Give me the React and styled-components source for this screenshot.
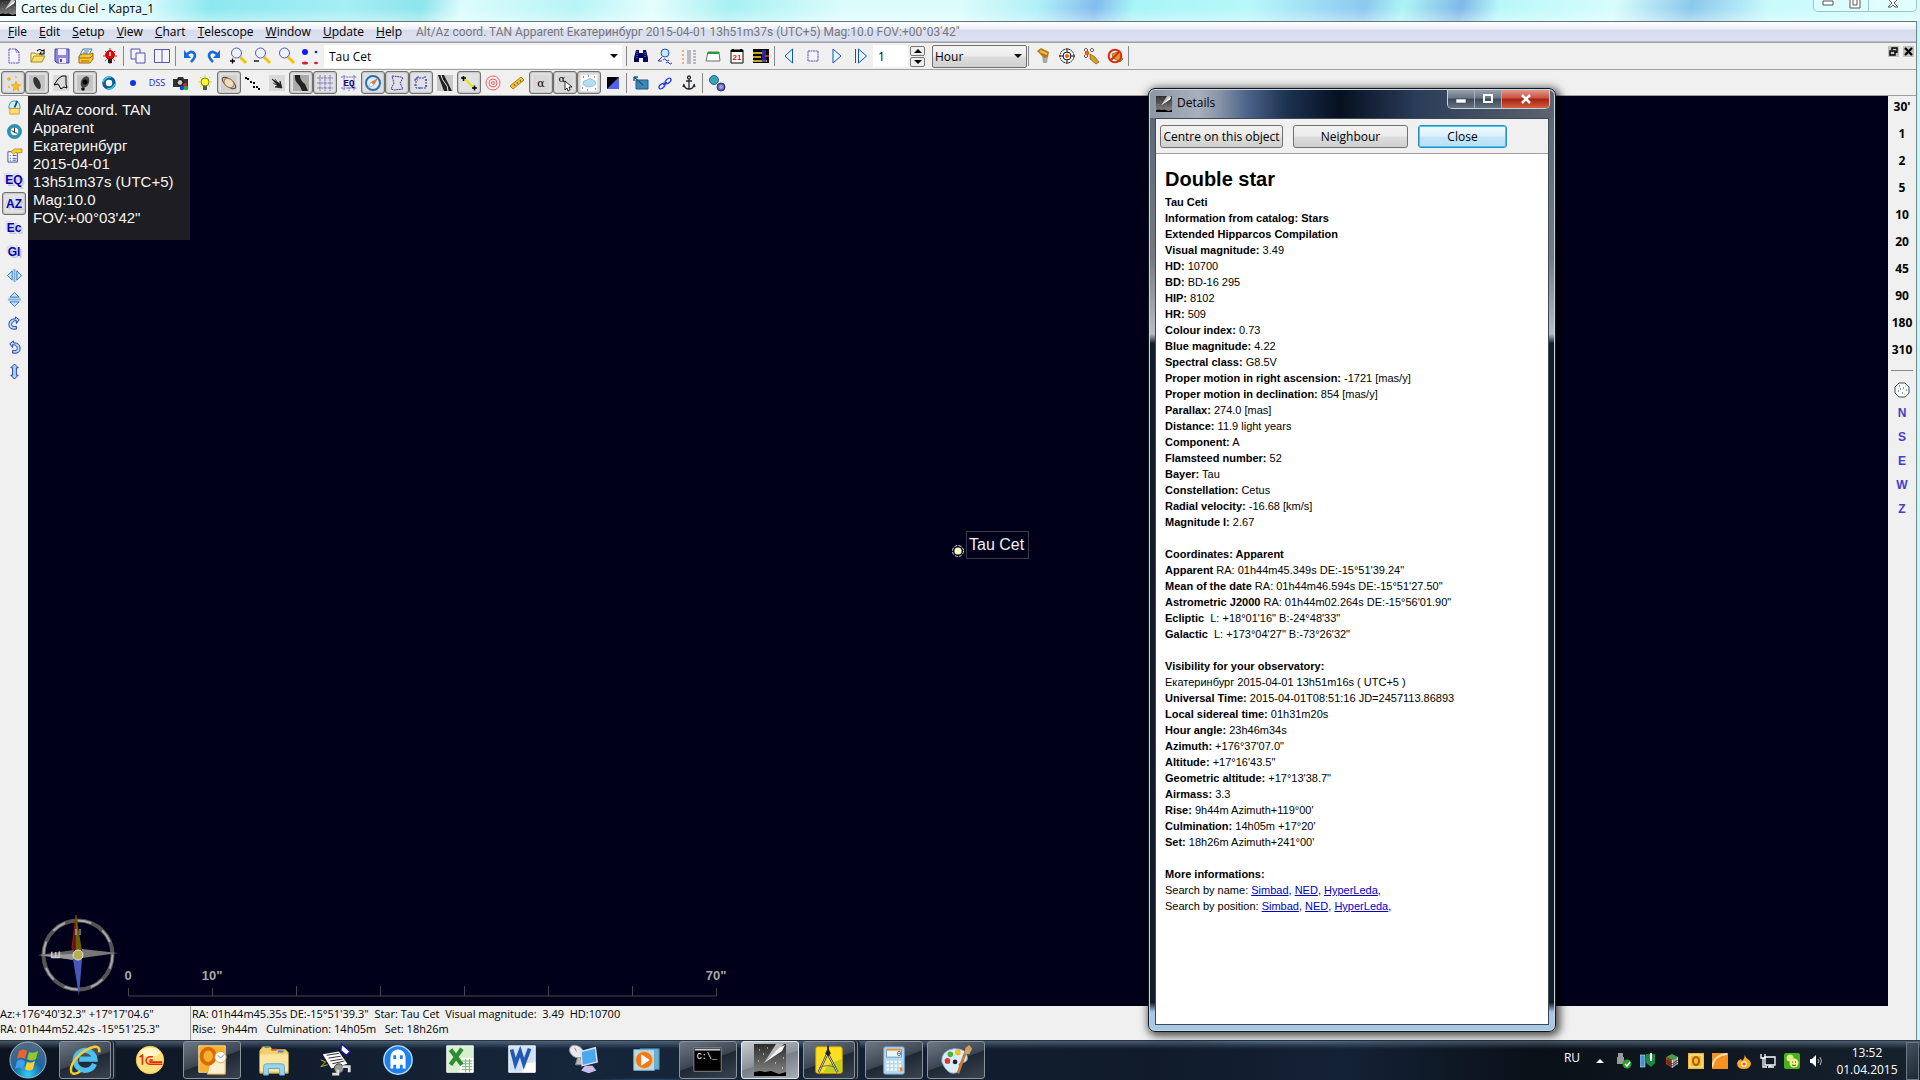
import React, { useState } from "react";
import styled, { createGlobalStyle, css } from "styled-components";

const GlobalStyle = createGlobalStyle`
  * {
    box-sizing: border-box;
  }
  body {
    margin: 0;
    background: #f0f0f0;
    color: #000;
    font-family: "Open Sans", "Noto Sans", sans-serif;
    font-size: 12px;
  }
  button, input, select {
    font: inherit;
    color: inherit;
    margin: 0;
  }
`;

// 16x16 drawings for the tool bars
const icons = {
  newChart: (
    <path d="M3 1h7l3 3v11H3zM10 1v3h3" fill="#f6f4ff" stroke="#5a50b0" strokeDasharray="2 .6" />
  ),
  open: (
    <>
      <path d="M1 14V5h4l1 1h6v3" fill="#fff3a0" stroke="#a88a20" />
      <path d="M1 14l3-6h11l-3 6z" fill="#ffe06a" stroke="#a88a20" />
      <path d="M7 3q3-3 5 0l2-1v4h-4l1-2" fill="none" stroke="#111" strokeWidth="1.2" />
    </>
  ),
  save: (
    <>
      <path d="M1 1h14v14H3l-2-2z" fill="#8e86d8" stroke="#4a40a8" />
      <path d="M4 1h8v6H4z" fill="#f0eeff" />
      <path d="M5 10h7v5H5z" fill="#eee" />
      <path d="M6 11h2v3H6z" fill="#4a40a8" />
    </>
  ),
  print: (
    <>
      <path d="M5 1h9l-3 6H2z" fill="#fff" stroke="#3a70b0" />
      <path d="M6 3h5M5 5h5" stroke="#3a70b0" />
      <path d="M1 8l3-2h9l2-1v6l-3 4H1z" fill="#ffc935" stroke="#9a6a10" />
      <path d="M1 10h11l3-3M3 13h8" stroke="#9a6a10" fill="none" />
    </>
  ),
  redLamp: (
    <>
      <path d="M8 0v16M1 8h14M3 3l10 10M13 3L3 13" stroke="#e01010" strokeDasharray="2 1" />
      <circle cx="8" cy="7" r="4.4" fill="#f00000" stroke="#900" />
      <path d="M6 11h4v4H6z" fill="#222" />
      <path d="M8 4v4" stroke="#fff" strokeWidth="1.5" />
    </>
  ),
  cascade: (
    <>
      <path d="M1 1h9v10H1z" fill="#f4f4fa" stroke="#5a50b0" />
      <path d="M6 5h9v10H6z" fill="#f4f4fa" stroke="#5a50b0" />
    </>
  ),
  tile: <path d="M.5 1.5h15v13H.5zM8 1.5v13" fill="#f4f4fa" stroke="#5a50b0" />,
  undo: (
    <>
      <path d="M4 7q5-5 8-2t-3 9" fill="none" stroke="#1a6cd0" strokeWidth="2.6" />
      <path d="M2 2v8h7z" fill="#1a6cd0" />
    </>
  ),
  redo: (
    <>
      <path d="M12 7q-5-5-8-2t3 9" fill="none" stroke="#1a6cd0" strokeWidth="2.6" />
      <path d="M14 2v8H7z" fill="#1a6cd0" />
    </>
  ),
  zoomIn: (
    <>
      <path d="M10 9l6 6" stroke="#f5c400" strokeWidth="3" />
      <circle cx="6.5" cy="5" r="5" fill="#eef4ff" stroke="#5550c0" />
      <path d="M0 13h5M2.5 10.5v5" stroke="#000" strokeWidth="1.3" />
    </>
  ),
  zoomOut: (
    <>
      <path d="M10 9l6 6" stroke="#f5c400" strokeWidth="3" />
      <circle cx="6.5" cy="5" r="5" fill="#eef4ff" stroke="#5550c0" />
      <path d="M0 13h5" stroke="#000" strokeWidth="1.3" />
    </>
  ),
  zoom: (
    <>
      <path d="M10 9l6 6" stroke="#f5c400" strokeWidth="3" />
      <circle cx="6.5" cy="5" r="5" fill="#eef4ff" stroke="#5550c0" />
    </>
  ),
  starSize: (
    <>
      <circle cx="3" cy="4" r="3" fill="#1818f0" />
      <circle cx="14" cy="4" r="1.3" fill="#1818f0" />
      <ellipse cx="3" cy="15" rx="3" ry="1.5" fill="#e01840" />
      <ellipse cx="14" cy="15" rx="2" ry="1.2" fill="#e01840" />
    </>
  ),
  binoculars: (
    <>
      <path d="M3 2h3v3h4V2h3l2 8v4h-5v-4H6v4H1v-4z" fill="#000060" />
      <path d="M4 3v7M12 4v6" stroke="#8090e0" strokeDasharray="1 1" />
    </>
  ),
  searchList: (
    <>
      <circle cx="8" cy="5" r="4" fill="#bfeaff" stroke="#2050d0" />
      <path d="M5 9l-4 4h4M6 12q2-2 3 0t3 0M9 15q2-2 3 0t3 0" fill="none" stroke="#2030d0" />
    </>
  ),
  list: (
    <>
      <path d="M1 3h3M1 7h3M1 11h3M1 15h3" stroke="#e07010" strokeDasharray="2 1" />
      <path d="M6 3h4M6 5h4M6 7h4M6 9h4M6 11h4M6 13h4M6 15h4M12 3h3M12 6h3M12 9h3M12 12h3M12 15h3" stroke="#667" strokeWidth=".8" />
    </>
  ),
  calendar: (
    <>
      <path d="M3 4h11l1 9H1z" fill="#fff" stroke="#707070" />
      <path d="M3 4h11v2H2z" fill="#20a030" />
    </>
  ),
  date: (
    <>
      <path d="M2 2h12v13H2z" fill="#fff" stroke="#000" />
      <path d="M2 3h12M4 1v3M12 1v3" stroke="#000" strokeWidth="2" />
      <text x="8" y="12" textAnchor="middle" fontSize="8" fontWeight="700" fill="#e01010" fontFamily="Liberation Sans">21</text>
    </>
  ),
  ephemeris: (
    <>
      <path d="M0 1h16v14H0z" fill="#000" />
      <path d="M0 5h10M0 9h8M0 13h14" stroke="#ffe020" strokeWidth="1.6" />
      <path d="M9 2h4v12H9z" fill="#3030c0" opacity=".8" />
      <path d="M12 8h4" stroke="#e02020" strokeWidth="2" />
    </>
  ),
  back: <path d="M11.5 1v14L4 8z" fill="#e4f6ff" stroke="#1050c0" />,
  stop: <path d="M3 3h10v10H3z" fill="#f4f2ff" stroke="#5a50b0" strokeDasharray="2 .5" />,
  play: <path d="M4 1v14l8-7z" fill="#e4f6ff" stroke="#1050c0" />,
  forward: <path d="M2.5 1v14M5.5 1v14l8-7z" fill="#e4f6ff" stroke="#1050c0" />,
  telescope: (
    <>
      <path d="M7 7l1 8h4l1-7z" fill="#a8a8a8" />
      <path d="M2 3l4-3 8 4-1 5-4 1z" fill="#b87818" />
      <path d="M5 3l7 3" stroke="#f0c040" strokeWidth="2" />
    </>
  ),
  target: (
    <>
      <circle cx="8" cy="8" r="7" fill="none" stroke="#222" strokeDasharray="2 .6" />
      <circle cx="8" cy="8" r="4" fill="none" stroke="#222" />
      <path d="M8 0v5M8 11v5M0 8h5M11 8h5" stroke="#222" />
      <circle cx="8" cy="8" r="2" fill="#f06010" />
    </>
  ),
  slew: (
    <>
      <path d="M1 2h12M1 8h6M3 0v12M9 0v5" stroke="#222" strokeDasharray="1 2" strokeWidth="1.4" />
      <circle cx="4" cy="5" r="2.3" fill="#f06010" />
      <path d="M7 6l5 3 4 5-3 2-6-5z" fill="#d8a020" stroke="#704800" strokeWidth=".6" />
    </>
  ),
  noScope: (
    <>
      <path d="M5 6l5-2 6 7-3 3-7-4z" fill="#d8a020" stroke="#704800" strokeWidth=".6" />
      <circle cx="8" cy="8" r="6.3" fill="none" stroke="#e02810" strokeWidth="2" />
      <path d="M4 12l8-8" stroke="#e02810" strokeWidth="2" />
    </>
  ),
  stars: (
    <>
      <path d="M11 6l1 3 4 1-3 2 1 4-3-2-3 2 1-4-3-2 4-1z" fill="#f8c020" stroke="#e09000" strokeWidth=".5" />
      <path d="M4 2v4M2 4h4M3 12h2M11 1v2" stroke="#f0b010" strokeWidth="1.3" />
    </>
  ),
  nebula: (
    <>
      <path d="M0 0h16v16H0z" fill="#c4c4c4" />
      <ellipse cx="8" cy="8" rx="3" ry="6.5" transform="rotate(-24 8 8)" fill="#333" />
    </>
  ),
  outline: (
    <>
      <path d="M0 0h16v16H0z" fill="#dadada" />
      <path d="M9 1h4v8l1 4-3-1-3 2-3-5-4 1 4-6z" fill="none" stroke="#000" />
    </>
  ),
  galaxy: (
    <>
      <path d="M0 0h16v16H0z" fill="#c4c4c4" />
      <ellipse cx="8" cy="7" rx="4" ry="6" transform="rotate(24 8 7)" fill="#444" />
      <circle cx="8" cy="7" r="2.5" fill="#000" />
      <circle cx="6" cy="14" r="1.8" fill="#111" />
    </>
  ),
  swirl: (
    <>
      <circle cx="8" cy="8" r="5" fill="#fff" stroke="#0c5a9c" strokeWidth="3.5" />
      <path d="M2 7q2-5 8-5M14 9q-2 5-8 5" fill="none" stroke="#40c8e0" strokeWidth="1.6" />
    </>
  ),
  blueDot: <circle cx="8" cy="8" r="3" fill="#1030f0" />,
  camera: (
    <>
      <path d="M0 4h4l1-2h5l1 2h4v8H0z" fill="#333" />
      <circle cx="7" cy="7.5" r="3" fill="#ccc" stroke="#000" />
      <circle cx="12" cy="10" r="2" fill="#e02020" />
      <circle cx="9" cy="13" r="2.3" fill="#2040e0" />
      <circle cx="13" cy="13" r="2.3" fill="#20b040" />
    </>
  ),
  lamp: (
    <>
      <path d="M8 0v16M1 7h14M3 2l10 10M13 2L3 12" stroke="#d8d800" strokeDasharray="2 1" />
      <circle cx="8" cy="7" r="4" fill="#ffff30" stroke="#808000" />
      <path d="M6 11h4v4H6z" fill="#555" />
    </>
  ),
  saturn: (
    <>
      <path d="M0 0h16v16H0z" fill="#d0d0d0" />
      <ellipse cx="8" cy="8" rx="8" ry="3.5" transform="rotate(38 8 8)" fill="none" stroke="#604020" />
      <ellipse cx="8" cy="8" rx="5.5" ry="4" transform="rotate(38 8 8)" fill="#f0dcc0" stroke="#a07850" />
    </>
  ),
  asteroids: (
    <g fill="#000">
      <path d="M0 2h2v2H0zM2 3h2v2H2zM5 6h2v2H5zM8 7h2v2H8zM8 11h2v2H8zM11 11h2v2h-2zM13 13h2v2h-2z" />
    </g>
  ),
  comet: (
    <>
      <path d="M0 0h16v16H0z" fill="#d8d8d8" />
      <path d="M3 4l8 5V6l2 7-7-1 3-1zM6 4l4 5M4 8l5 3" fill="#222" stroke="#000" strokeWidth=".6" />
    </>
  ),
  milkyWay: (
    <>
      <path d="M0 0h16v16H0z" fill="#aaa" />
      <path d="M2 0h5q0 6 5 9l3 7H9Q8 12 5 9 1 5 2 0z" fill="#222" />
    </>
  ),
  grid: (
    <path d="M3 0v16M8 0v16M13 0v16M0 3h16M0 8h16M0 13h16" stroke="#6464b8" strokeWidth=".8" strokeDasharray="3 .6" />
  ),
  eqGrid: (
    <>
      <path d="M3 0v16M13 0v16M0 2h16M0 13h16M8 12v4" stroke="#5050c0" strokeWidth=".8" strokeDasharray="2 .6" />
      <text x="8" y="11" textAnchor="middle" fontSize="9" fontWeight="700" fill="#000080" fontFamily="Liberation Mono">EQ</text>
    </>
  ),
  compass: (
    <>
      <circle cx="8" cy="8" r="7" fill="#d8efff" stroke="#2a70b8" strokeWidth="2" />
      <path d="M13 3L9 10 6 7z" fill="#f07020" />
      <path d="M3 13l3-6 3 3z" fill="#fff" stroke="#777" strokeWidth=".5" />
    </>
  ),
  constLine: (
    <path d="M3 1l9 1 2 1-3 5 3 6-9 1-3-1 3-6z" fill="none" stroke="#3838c8" strokeDasharray="2 .6" />
  ),
  constBorder: (
    <path d="M3 3h9V1M3 3v10h10V3M1 5h4M1 10h3M5 1v3M12 5h3M12 11h3M7 12v3" fill="none" stroke="#3030d8" strokeDasharray="2 1" />
  ),
  photo: (
    <>
      <path d="M0 0h16v16H0z" fill="#c8c8c8" />
      <path d="M1 0h6l8 16H7z" fill="#222" />
      <path d="M4 0q1 5 4 8t3 8" fill="none" stroke="#eee" />
    </>
  ),
  measure: (
    <>
      <path d="M3 3l10 10" stroke="#e8e010" strokeWidth="2" />
      <path d="M0 3h5M2.5 1v5M11 13h5M13.5 10.5v5" stroke="#000" strokeWidth="1.5" />
    </>
  ),
  rings: (
    <g fill="none" stroke="#f06060">
      <circle cx="8" cy="8" r="7" />
      <circle cx="8" cy="8" r="4" />
      <circle cx="8" cy="8" r="1.5" />
    </g>
  ),
  ruler: (
    <>
      <path d="M1 11L12 2l3 3L4 14z" fill="#f0c040" stroke="#b08010" />
      <path d="M5 9l1 2M8 7l1 2M11 5l1 2" stroke="#806000" />
    </>
  ),
  alpha: (
    <>
      <path d="M0 0h16v16H0z" fill="#d8d8d8" />
      <text x="8" y="12" textAnchor="middle" fontSize="11" fontFamily="DejaVu Serif">α</text>
    </>
  ),
  alphaCursor: (
    <>
      <path d="M0 0h16v16H0z" fill="#d8d8d8" />
      <text x="5" y="7" textAnchor="middle" fontSize="10" fontFamily="DejaVu Serif">α</text>
      <path d="M8 6v9l2-2 1 3 2-1-1-3h3z" fill="#fff" stroke="#000" strokeWidth=".8" />
    </>
  ),
  cloud: (
    <>
      <path d="M0 0h16v16H0z" fill="#fff" />
      <path d="M2 9q0-4 4-4 3-3 6 0 3 1 3 4-3 3-7 3T2 9z" fill="#b8dcf0" stroke="#78b4dc" strokeWidth=".7" />
      <path d="M2 2h1M7 1h1M13 2h1M1 13h1M6 15h1M14 14h1" stroke="#0020d0" />
    </>
  ),
  contrast: (
    <>
      <path d="M2 2h12v12H2z" fill="#000" />
      <path d="M14 2v12H2z" fill="#5060f0" />
    </>
  ),
  syncChart: (
    <>
      <path d="M3 5h12v9H3z" fill="#3a88b8" stroke="#205880" />
      <path d="M1 2l9 8M1 2v4M1 2h4" stroke="#205880" strokeWidth="1.4" />
    </>
  ),
  link: (
    <g fill="none" stroke="#2038d8" strokeWidth="1.2">
      <ellipse cx="5" cy="11" rx="3.6" ry="2" transform="rotate(-42 5 11)" />
      <ellipse cx="11" cy="6" rx="3.6" ry="2" transform="rotate(-42 11 6)" />
      <path d="M6 10l4-3" />
    </g>
  ),
  anchor: (
    <path d="M8 4v10M5 6h6M3 10q1 4 5 4t5-4M3 9l-1 3M13 9l1 3M8 1a1.5 1.5 0 100 3 1.5 1.5 0 000-3" fill="none" stroke="#202830" strokeWidth="1.3" />
  ),
  track: (
    <>
      <circle cx="5" cy="5" r="4.5" fill="#40a0b8" stroke="#206880" />
      <circle cx="12" cy="12" r="4" fill="#6060b0" stroke="#303080" />
      <circle cx="12" cy="12" r="2" fill="#a0a0e8" />
    </>
  ),
  observatory: (
    <>
      <path d="M2 9q0-8 6-8t6 8z" fill="#d0f0f8" stroke="#3090b0" />
      <path d="M8 8l3-7" stroke="#205080" strokeWidth="2" />
      <path d="M3 9h10v6H3z" fill="#ffdf80" stroke="#e09820" />
    </>
  ),
  clock: (
    <>
      <circle cx="8" cy="8" r="6" fill="#fff" stroke="#3090b8" strokeWidth="4" />
      <path d="M8 4v5l3 1M5 7l3 2" stroke="#222" fill="none" />
    </>
  ),
  config: (
    <>
      <path d="M1 4h10v11H1z" fill="#fff" stroke="#4048a0" />
      <path d="M3 8h1M6 8h4M3 11h1M6 11h4M3 13h1M6 13h4" stroke="#4048a0" />
      <path d="M4 4l4-3h8v4H9L7 7z" fill="#f8d030" stroke="#a88010" strokeWidth=".8" />
    </>
  ),
  flipH: (
    <>
      <path d="M5.5 3v10L.5 8zM10.5 3v10l5-5z" fill="#b8e8fa" stroke="#2060c0" strokeWidth=".9" />
      <path d="M7.5 1v14M8.5 1v14" stroke="#3088d0" strokeWidth=".7" />
    </>
  ),
  flipV: (
    <>
      <path d="M3 5.5h10L8 .5zM3 10.5h10l-5 5z" fill="#b8e8fa" stroke="#2060c0" strokeWidth=".9" />
      <path d="M1 7.5h14M1 8.5h14" stroke="#3088d0" strokeWidth=".7" />
    </>
  ),
  rotateR: (
    <path d="M9 1l4 3-3 4V5q-5 0-5 4 0 3 5 2v3q-8 1-8-5 0-6 7-6z" fill="#b8e0ff" stroke="#2030b0" />
  ),
  rotateL: (
    <path d="M7 1L3 4l3 4V5q5 0 5 4 0 3-5 2v3q8 1 8-5 0-6-7-6z" fill="#b8e0ff" stroke="#2030b0" />
  ),
  flipBoth: (
    <path d="M8 0l4 4h-2v8h2l-4 4-4-4h2V4H4z" fill="#a8d8f8" stroke="#2038a8" />
  ),
  horizon: (
    <>
      <path d="M5 1h6l4 4v6l-4 4H5l-4-4V5z" fill="#fff" stroke="#305060" />
      <path d="M5 4h1M9 6h1M4 9h1M8 11h1M12 8h1M6 7h1" stroke="#103080" />
      <path d="M11 4h1M10 12h1" stroke="#e0a000" />
    </>
  ),
};

const Icon = ({ name, size = 16 }) => (
  <svg width={size} height={size} viewBox="0 0 16 16" overflow="visible" aria-hidden="true">
    {icons[name]}
  </svg>
);

const CometIcon = ({ size = 16 }) => (
  <svg width={size} height={size} viewBox="0 0 32 32" aria-hidden="true">
    <defs>
      <linearGradient id="cometSky" x1="0" y1="0" x2="0" y2="1">
        <stop offset="0" stopColor="#2c2c2c" />
        <stop offset="1" stopColor="#8a8a8a" />
      </linearGradient>
    </defs>
    <path d="M0 0h32v32H0z" fill="url(#cometSky)" />
    <path d="M10 19L22 0h8z" fill="#bbb" />
    <path d="M10 19L26 3l5-2-3 6z" fill="#f4f4f4" />
    <path d="M5 6h1M9 10h1M4 17h1M21 19h1M29 14h1M28 24h1M13 4h1" stroke="#ffd" />
    <path d="M0 28l6-1 5 1 6-1 8 3 7-2v4H0z" fill="#000" />
  </svg>
);

const mainTools = [
  [["newChart", "New chart"], ["open", "Open"], ["save", "Save"], ["print", "Print"], ["redLamp", "Night vision"]],
  [["cascade", "Cascade"], ["tile", "Tile"]],
  [["undo", "Undo"], ["redo", "Redo"], ["zoomIn", "Zoom in"], ["zoomOut", "Zoom out"], ["zoom", "Set field of view"], ["starSize", "Star size"]],
];

const searchTools = [["binoculars", "Search"], ["searchList", "Advanced search"], ["list", "Object list"], ["calendar", "Calendar"], ["date", "Date"], ["ephemeris", "Ephemeris"]];
const timeTools = [["back", "Step back"], ["stop", "Now"], ["play", "Step forward"], ["forward", "Animate"]];
const scopeTools = [["telescope", "Connect telescope"], ["target", "Slew"], ["slew", "Sync"], ["noScope", "Abort slew"]];

const displayTools = [
  ["stars", "Show stars", true],
  ["nebula", "Show nebulae", true],
  ["outline", "Show outlines"],
  ["galaxy", "Show pictures", true],
  ["swirl", "Refresh"],
  ["blueDot", "Blink"],
  ["dss", "DSS image"],
  ["camera", "Image list"],
  ["lamp", "Sky brightness"],
  ["saturn", "Show planets", true],
  ["asteroids", "Show asteroids"],
  ["comet", "Show comets"],
  ["milkyWay", "Show Milky Way", true],
  ["grid", "Show grid", true],
  ["eqGrid", "Show equatorial grid"],
  ["compass", "Show compass", true],
  ["constLine", "Constellation lines", true],
  ["constBorder", "Constellation borders", true],
  ["photo", "Galactic equator"],
  ["measure", "Ecliptic", true],
  ["rings", "Show marks"],
  ["ruler", "Measure distance"],
  ["alpha", "Show labels", true],
  ["alphaCursor", "Edit labels", true],
  ["cloud", "Object under horizon", true],
  ["contrast", "Background"],
];
const linkTools = [["syncChart", "Synchronize charts"], ["link", "Link charts"], ["anchor", "Lock on object"]];

const leftTools = [
  ["observatory", "Observatory"],
  ["clock", "Date and time"],
  ["config", "Configuration"],
  ["EQ", "Equatorial"],
  ["AZ", "Azimuthal", true],
  ["Ec", "Ecliptic"],
  ["Gl", "Galactic"],
  ["flipH", "Flip horizontally"],
  ["flipV", "Flip vertically"],
  ["rotateR", "Rotate right"],
  ["rotateL", "Rotate left"],
  ["flipBoth", "Reset rotation"],
];

const menus = ["File", "Edit", "Setup", "View", "Chart", "Telescope", "Window", "Update", "Help"];
const fields = ["30'", "1", "2", "5", "10", "20", "45", "90", "180", "310"];
const directions = ["N", "S", "E", "W", "Z"];

const legend = [
  "Alt/Az coord. TAN",
  "Apparent",
  "Екатеринбург",
  "2015-04-01",
  "13h51m37s (UTC+5)",
  "Mag:10.0",
  "FOV:+00°03'42\"",
];

const details = [
  [
    ["Tau Ceti", ""],
    ["Information from catalog: Stars", ""],
    ["Extended Hipparcos Compilation", ""],
    ["Visual magnitude:", "3.49"],
    ["HD:", "10700"],
    ["BD:", "BD-16 295"],
    ["HIP:", "8102"],
    ["HR:", "509"],
    ["Colour index:", "0.73"],
    ["Blue magnitude:", "4.22"],
    ["Spectral class:", "G8.5V"],
    ["Proper motion in right ascension:", "-1721 [mas/y]"],
    ["Proper motion in declination:", "854 [mas/y]"],
    ["Parallax:", "274.0 [mas]"],
    ["Distance:", "11.9 light years"],
    ["Component:", "A"],
    ["Flamsteed number:", "52"],
    ["Bayer:", "Tau"],
    ["Constellation:", "Cetus"],
    ["Radial velocity:", "-16.68 [km/s]"],
    ["Magnitude I:", "2.67"],
  ],
  [
    ["Coordinates: Apparent", ""],
    ["Apparent", "RA: 01h44m45.349s DE:-15°51'39.24\""],
    ["Mean of the date", "RA: 01h44m46.594s DE:-15°51'27.50\""],
    ["Astrometric J2000", "RA: 01h44m02.264s DE:-15°56'01.90\""],
    ["Ecliptic ", "L: +18°01'16\" B:-24°48'33\""],
    ["Galactic ", "L: +173°04'27\" B:-73°26'32\""],
  ],
  [
    ["Visibility for your observatory:", ""],
    ["", "Екатеринбург 2015-04-01 13h51m16s ( UTC+5 )"],
    ["Universal Time:", "2015-04-01T08:51:16 JD=2457113.86893"],
    ["Local sidereal time:", "01h31m20s"],
    ["Hour angle:", "23h46m34s"],
    ["Azimuth:", "+176°37'07.0\""],
    ["Altitude:", "+17°16'43.5\""],
    ["Geometric altitude:", "+17°13'38.7\""],
    ["Airmass:", "3.3"],
    ["Rise:", "9h44m Azimuth+119°00'"],
    ["Culmination:", "14h05m +17°20'"],
    ["Set:", "18h26m Azimuth+241°00'"],
  ],
];

// 36x36 drawings for the task bar
const appIcons = {
  ie: (
    <>
      <path d="M28 22a10.5 10.5 0 11.5-5H12" fill="none" stroke="#4cc0f0" strokeWidth="5.5" />
      <path d="M4 32C0 24 12 8 28 4q6-1 5 6" fill="none" stroke="#f8cc30" strokeWidth="2.6" />
      <path d="M4 32q4 2 9-2" fill="none" stroke="#f8cc30" strokeWidth="2.6" />
    </>
  ),
  onec: (
    <>
      <circle cx="18" cy="18" r="14.5" fill="#ffe27a" stroke="#f8c850" />
      <ellipse cx="18" cy="10" rx="10" ry="5" fill="#fff6c8" />
      <path d="M7 15l3-2v10M21 14.5h-3a4 4 0 000 8h13M21 18h-2.5a1.3 1.3 0 000 2.2H31" fill="none" stroke="#e02818" strokeWidth="1.7" />
    </>
  ),
  outlook: (
    <>
      <path d="M4 3h28v28H4z" fill="#f8b030" stroke="#ffe0a0" />
      <path d="M16 19l16-3v17H13z" fill="#fff0d0" stroke="#e8a030" />
      <ellipse cx="14" cy="14" rx="7" ry="8" fill="none" stroke="#d86a08" strokeWidth="4" />
      <circle cx="27" cy="15" r="6" fill="#fff" stroke="#e0a040" />
      <path d="M24 13l3 3 4-4" fill="none" stroke="#888" />
    </>
  ),
  folder: (
    <>
      <path d="M3 8l3-4h8l2 3h14l3 3v22H3z" fill="#f3cf70" stroke="#c8a048" />
      <path d="M8 4h5" stroke="#3a9a50" strokeWidth="2" />
      <path d="M15 7h6" stroke="#d05040" strokeWidth="2" />
      <path d="M22 9h6" stroke="#4080d0" strokeWidth="2" />
      <path d="M3 12h30v18H3z" fill="#fbe6a0" />
      <path d="M7 34v-9q0-3 3-3h16q3 0 3 3v9h-5v-7H12v7z" fill="#9ad4ee" stroke="#5aa8d0" />
    </>
  ),
  script: (
    <>
      <path d="M4 12l17-3 9 13-17 5z" fill="#fff" />
      <path d="M8 13l13-2M10 16l13-2M12 19l13-2M14 22l13-3" stroke="#222" />
      <path d="M24 1l9 8-4 4-6-5z" fill="#fff" stroke="#1818a0" strokeWidth="1.5" />
      <path d="M2 18l5 2-5 5 7-2" fill="none" stroke="#c8c020" />
      <circle cx="21" cy="27" r="5" fill="#999" stroke="#333" />
      <path d="M14 33h6v-5M25 25h7v6" fill="none" stroke="#ddd" strokeWidth="3" />
    </>
  ),
  ghost: (
    <>
      <circle cx="18" cy="18" r="15" fill="#1e80f0" stroke="#b8dcff" strokeWidth="1.5" />
      <path d="M10 27V15a8 8 0 0116 0v12h-3v-4h-3v4h-4v-4h-3v4z" fill="#fff" />
      <path d="M13 13h3v4h-3zM20 13h3v4h-3z" fill="#1e80f0" />
    </>
  ),
  excel: (
    <>
      <path d="M4 3h28v28H4z" fill="#d8efd0" stroke="#fff" />
      <path d="M19 16h13v15H17z" fill="#fff" />
      <path d="M20 19h11M20 22h11M20 25h11M20 28h11M24 17v14M28 17v14" stroke="#70b070" />
      <path d="M8 7l12 16M20 6L8 23" stroke="#2f8a34" strokeWidth="4.5" />
    </>
  ),
  word: (
    <>
      <path d="M4 3h28v28H4z" fill="#cfe2fa" stroke="#fff" />
      <path d="M20 22l12-2v11H18z" fill="#fff" />
      <path d="M7 7l4 15 5-13 4 13 6-16" fill="none" stroke="#2458b0" strokeWidth="4" />
    </>
  ),
  network: (
    <>
      <ellipse cx="10" cy="9" rx="8" ry="6" transform="rotate(35 10 9)" fill="#e8e8ee" stroke="#999" />
      <path d="M10 9l-2-4M11 16l-2 7h8l-3-8" stroke="#888" fill="#bbb" />
      <path d="M15 9l15-4 2 15-16 4z" fill="#4aa8f0" stroke="#dde" strokeWidth="1.5" />
      <path d="M19 24h8l4 5-8 3-8-3z" fill="#c8c0e8" />
    </>
  ),
  media: (
    <>
      <path d="M12 6h20v22H12z" fill="#6ab0d0" stroke="#3a7898" />
      <path d="M5 7h22v22H5z" fill="#b8dcec" stroke="#6aa8c8" />
      <circle cx="16" cy="18" r="9" fill="#f07818" stroke="#fbb870" />
      <path d="M13 12v12l9-6z" fill="#fff" />
    </>
  ),
  cmd: (
    <>
      <path d="M3 5h29v25H3z" fill="#000" stroke="#888" />
      <path d="M4 6h27v2H4z" fill="#ccc" />
      <text x="6" y="17" fontSize="9" fill="#fff" fontFamily="Liberation Mono">C:\_</text>
    </>
  ),
  divider: (
    <>
      <rect x="4" y="4" width="28" height="28" rx="2" fill="#ffe020" stroke="#c8a000" />
      <path d="M17 23l14-6v14H12z" fill="#a8c818" opacity=".7" />
      <path d="M16 12L7 31M17 12l10 19" stroke="#333" strokeWidth="2.4" />
      <path d="M16 12L7 31M17 12l10 19" stroke="#ddd" />
      <path d="M8 26q8-4 17 0" fill="none" stroke="#668" />
      <path d="M16 3h2v4l2 4-3 3-3-3 2-4z" fill="#222" />
    </>
  ),
  calc: (
    <>
      <rect x="7" y="4" width="22" height="29" rx="2" fill="#b4d8f0" stroke="#6898c0" />
      <path d="M10 7h16v8H10z" fill="#e8f4fa" stroke="#6898c0" />
      <path d="M10 7h16" stroke="#f09030" strokeWidth="2" />
      <path d="M10 20h16M10 24h16M10 28h16" stroke="#fff" strokeWidth="2.6" strokeDasharray="2.6 1.7" />
      <path d="M24 26h3v4h-3z" fill="#f08020" />
      <text x="21" y="14" fontSize="8" fill="#333" fontFamily="Liberation Mono">0</text>
    </>
  ),
  paint: (
    <>
      <path d="M3 20Q2 8 16 6q14 0 14 10 0 5-7 5-3 1-1 5 0 6-7 6T3 20z" fill="#d8eefa" stroke="#88b0cc" />
      <circle cx="9" cy="19" r="3" fill="#e03830" />
      <circle cx="12" cy="12" r="3" fill="#50b040" />
      <circle cx="20" cy="10" r="3" fill="#f0c020" />
      <circle cx="17" cy="20" r="2.5" fill="#223" />
      <path d="M20 32l8-22" stroke="#c87830" strokeWidth="3" />
      <path d="M27 11l1-6 4-3 3 4-3 6z" fill="#d8a060" />
    </>
  ),
};

const tasks = [
  { id: "ie", name: "Internet Explorer", open: true, stack: true },
  { id: "onec", name: "1C" },
  { id: "outlook", name: "Outlook", open: true },
  { id: "folder", name: "Explorer" },
  { id: "script", name: "Script" },
  { id: "ghost", name: "Ghost" },
  { id: "excel", name: "Excel" },
  { id: "word", name: "Word" },
  { id: "network", name: "Remote desktop" },
  { id: "media", name: "Media Player" },
  { id: "cmd", name: "Command prompt", open: true },
  { id: "cdc", name: "Cartes du Ciel", open: true, active: true },
  { id: "divider", name: "Compass", open: true, stack: true },
  { id: "calc", name: "Calculator", open: true },
  { id: "paint", name: "Paint", open: true },
];

const trayIcons = {
  usb: (
    <>
      <path d="M2 0h5v4h1v7H1V4h1z" fill="#999" />
      <circle cx="11" cy="11" r="4.5" fill="#28a030" />
      <path d="M9 11l2 2 3-4" fill="none" stroke="#fff" strokeWidth="1.5" />
    </>
  ),
  monitor: (
    <>
      <path d="M0 2h5v12H0z" fill="#4a90d0" stroke="#ddd" strokeWidth=".6" />
      <path d="M6 1h9v9l-4 4-5-4z" fill="#1c8a40" />
      <path d="M10 0h2v8h-2z" fill="#fff" />
    </>
  ),
  cube: (
    <>
      <path d="M8 1l6 3-6 3-6-3z" fill="#40a040" />
      <path d="M2 4l6 3v8l-6-4z" fill="#d04020" />
      <path d="M14 4L8 7v8l6-4z" fill="#ddd" />
      <path d="M4 5v8M6 6v8M2 7l6 4 6-4M2 9l6 4 6-4M10 6v8M12 5v8" stroke="#222" fill="none" strokeWidth=".7" />
    </>
  ),
  mail: (
    <>
      <path d="M0 0h16v16H0z" fill="#f8b830" />
      <path d="M2 2h12v12H2z" fill="none" stroke="#fff0c0" />
      <ellipse cx="8" cy="8" rx="3" ry="4" fill="none" stroke="#a86000" strokeWidth="2" />
    </>
  ),
  curve: (
    <>
      <path d="M0 0h16v16H0z" fill="#f89020" />
      <path d="M0 14Q2 2 15 1" fill="none" stroke="#ffe0b0" strokeWidth="2" />
    </>
  ),
  flame: (
    <>
      <path d="M9 0q-1 4 4 7 2 2 2 4-1 5-7 5-7 0-7-6 1-3 4-4l1 2q3-3 3-8z" fill="#ffa820" />
      <circle cx="8" cy="11" r="3" fill="#fff0c0" />
      <circle cx="8" cy="11" r="1.5" fill="#e05010" />
    </>
  ),
  lan: (
    <>
      <path d="M5 4h10v8H5zM8 14h6M10 12v2" fill="none" stroke="#fff" strokeWidth="1.3" />
      <path d="M1 1v4h4V1M3 5v9h4" fill="none" stroke="#fff" strokeWidth="1.3" />
    </>
  ),
  agent: (
    <>
      <rect width="16" height="16" rx="2" fill="#48b020" />
      <circle cx="6" cy="5" r="3.5" fill="#d8f080" />
      <circle cx="10" cy="10" r="4.5" fill="#f0f090" />
      <path d="M8 9h1M11 9h1M8 12q2 1 4 0" stroke="#405010" fill="none" />
    </>
  ),
  sound: (
    <>
      <path d="M2 6h2l4-4v12l-4-4H2z" fill="#fff" />
      <path d="M10 6q2 2 0 4M12 4q3 4 0 8" fill="none" stroke="#ddd" strokeWidth=".8" />
    </>
  ),
};

const ToolGroup = ({ items }) =>
  items.map(([name, label, pressed]) => (
    <Tool key={label} type="button" aria-label={label} aria-pressed={!!pressed} $pressed={pressed}>
      {name === "dss" ? <Dss>DSS</Dss> : <Icon name={name} />}
    </Tool>
  ));

const CompassRose = () => (
  <Rose viewBox="0 0 84 84" aria-hidden="true">
    <circle cx="42" cy="42" r="34.5" fill="none" stroke="#555" strokeWidth="4" />
    <circle cx="42" cy="42" r="34.5" fill="none" stroke="#a8a8a8" strokeWidth="2" strokeDasharray="14 13" />
    <path d="M2 42l36-5v10z" fill="#666" />
    <path d="M82 40L46 36v9z" fill="#777" />
    <path d="M2 42l36-1v6z" fill="#999" />
    <path d="M40 42V2l-4 33z" fill="#601010" stroke="#c02020" strokeWidth=".8" />
    <path d="M40 2l6 36h-6z" fill="#6a6000" />
    <path d="M40 16v6M44 16v6" stroke="#ccc" />
    <path d="M37 46h9l-3 37z" fill="#4858b8" />
    <circle cx="42" cy="42" r="5" fill="#b8b050" stroke="#ddd" />
    <text x="0" y="0" transform="translate(24 46) rotate(-90)" fontSize="12" fontWeight="700" fill="#ccc" fontFamily="Liberation Sans">E</text>
  </Rose>
);

const ScaleBar = () => (
  <Scale viewBox="0 0 620 40" aria-hidden="true">
    <path
      d="M8.5 23v8h588v-8M92.500 23v8M176.500 21v10M260.500 21v10M344.500 21v10M428.500 21v10M512.500 21v10"
      fill="none"
      stroke="#44464f"
    />
    <g fill="#a8a8a8" fontSize="13" fontWeight="700" textAnchor="middle" fontFamily="Liberation Sans, Arial, sans-serif">
      <text x="8" y="15">0</text>
      <text x="92" y="15">10"</text>
      <text x="596" y="15">70"</text>
    </g>
  </Scale>
);

const StartOrb = () => (
  <svg width="38" height="38" viewBox="0 0 38 38" aria-hidden="true">
    <defs>
      <radialGradient id="orb" cx=".5" cy=".9" r=".8">
        <stop offset="0" stopColor="#30d0f8" />
        <stop offset=".5" stopColor="#1a68a0" />
        <stop offset="1" stopColor="#506880" />
      </radialGradient>
    </defs>
    <circle cx="19" cy="19" r="18" fill="url(#orb)" stroke="#98b8cc" />
    <path d="M10 10q4-3 8 0l-2 8q-4-3-8 0z" fill="#f06030" />
    <path d="M20 11q4 2 9-1l-2 8q-4 3-9 0z" fill="#90c830" />
    <path d="M8 20q4-3 8 0l-2 8q-4-3-8 0z" fill="#40a0f0" />
    <path d="M18 21q4 2 8-1l-2 8q-4 3-8 0z" fill="#ffd030" />
  </svg>
);

const SearchLine = ({ by }) => (
  <Line>
    Search by {by}: <DetailLink href="#simbad">Simbad</DetailLink>,{" "}
    <DetailLink href="#ned">NED</DetailLink>, <DetailLink href="#hyperleda">HyperLeda</DetailLink>,
  </Line>
);

const DetailsWindow = () => (
  <Dialog role="dialog" aria-label="Details">
    <DialogTitle>
      <CometIcon />
      <DialogName>Details</DialogName>
      <DialogControls>
        <DialogControl type="button" aria-label="Minimize">
          <svg width="12" height="10" viewBox="0 0 12 10"><path d="M1 5h10v4H1z" fill="#fff" stroke="#445" strokeWidth=".6" /></svg>
        </DialogControl>
        <DialogControl type="button" aria-label="Maximize">
          <svg width="12" height="10" viewBox="0 0 12 10"><path d="M2 1h8v7H2z" fill="none" stroke="#fff" strokeWidth="2" /></svg>
        </DialogControl>
        <DialogControl type="button" aria-label="Close window" $close>
          <svg width="12" height="10" viewBox="0 0 12 10"><path d="M2 1l8 8M10 1L2 9" stroke="#fff" strokeWidth="2.6" /></svg>
        </DialogControl>
      </DialogControls>
    </DialogTitle>
    <DialogBody>
      <DialogBar>
        <Button type="button" $width={123}>Centre on this object</Button>
        <Button type="button" $width={115}>Neighbour</Button>
        <Button type="button" $width={89} $focused>Close</Button>
      </DialogBar>
      <DetailText>
        <DetailHeading>Double star</DetailHeading>
        {details.map((group, i) => (
          <DetailGroup key={i}>
            {group.map(([label, value]) => (
              <Line key={label + value}>
                {label && <b>{label}</b>}
                {label && value ? " " : ""}
                {value}
              </Line>
            ))}
          </DetailGroup>
        ))}
        <DetailGroup>
          <Line><b>More informations:</b></Line>
          <SearchLine by="name" />
          <SearchLine by="position" />
        </DetailGroup>
      </DetailText>
    </DialogBody>
  </Dialog>
);

const App = () => {
  const [search, setSearch] = useState("Tau Cet");
  const [step, setStep] = useState(1);

  return (
    <>
      <GlobalStyle />
      <Desktop>
        <TitleBar>
          <CometIcon />
          <Title>Cartes du Ciel - Карта_1</Title>
          <WindowControls>
            <WindowControl type="button" aria-label="Minimize">
              <svg width="12" height="6" viewBox="0 0 12 6"><path d="M1 1h10v4H1z" fill="#fff" stroke="#555" /></svg>
            </WindowControl>
            <WindowControl type="button" aria-label="Restore">
              <svg width="12" height="9" viewBox="0 0 12 9"><path d="M1 0v8h10V0M4 0v5h4V0" fill="#fff" stroke="#555" /></svg>
            </WindowControl>
            <WindowControl type="button" aria-label="Close" $wide>
              <svg width="12" height="8" viewBox="0 0 12 8"><path d="M2 0l3 3-4 4h3l2-2 2 2h3L7 3l3-3" fill="#fff" stroke="#555" /></svg>
            </WindowControl>
          </WindowControls>
        </TitleBar>

        <AppFrame>
          <MenuBar>
            {menus.map((m) => (
              <MenuItem key={m} type="button">
                <u>{m[0]}</u>{m.slice(1)}
              </MenuItem>
            ))}
            <MenuInfo>
              Alt/Az coord. TAN Apparent Екатеринбург 2015-04-01 13h51m37s (UTC+5) Mag:10.0 FOV:+00°03'42"
            </MenuInfo>
          </MenuBar>

          <MainBar>
            {mainTools.map((items, i) => (
              <React.Fragment key={i}>
                {i > 0 && <Separator />}
                <ToolGroup items={items} />
              </React.Fragment>
            ))}
            <Combo>
              <ComboInput aria-label="Object name" value={search} onChange={(e) => setSearch(e.target.value)} />
              <ComboArrow type="button" aria-label="Search history">
                <svg width="8" height="4" viewBox="0 0 8 4"><path d="M0 0h8L4 4z" /></svg>
              </ComboArrow>
            </Combo>
            <Separator $wide />
            <ToolGroup items={searchTools} />
            <Separator />
            <ToolGroup items={timeTools} />
            <StepInput aria-label="Time step" value={step} onChange={(e) => setStep(e.target.value)} />
            <Spinner>
              <SpinButton type="button" aria-label="Increase" onClick={() => setStep(+step + 1)}>
                <svg width="8" height="4" viewBox="0 0 8 4"><path d="M0 4h8L4 0z" /></svg>
              </SpinButton>
              <SpinButton type="button" aria-label="Decrease" onClick={() => setStep(+step - 1)}>
                <svg width="8" height="4" viewBox="0 0 8 4"><path d="M0 0h8L4 4z" /></svg>
              </SpinButton>
            </Spinner>
            <UnitBox>
              <UnitSelect aria-label="Time unit" defaultValue="Hour">
                <option>Minute</option>
                <option>Hour</option>
                <option>Day</option>
              </UnitSelect>
              <svg width="8" height="4" viewBox="0 0 8 4"><path d="M0 0h8L4 4z" /></svg>
            </UnitBox>
            <Separator />
            <ToolGroup items={scopeTools} />
            <Separator />
            <ChildControls>
              <ChildControl type="button" aria-label="Restore chart">
                <svg width="9" height="9" viewBox="0 0 9 9"><path d="M3 3V1h5v4H6M1 4h5v4H1z" fill="none" stroke="#000" strokeWidth="1.4" /></svg>
              </ChildControl>
              <ChildControl type="button" aria-label="Close chart">
                <svg width="9" height="9" viewBox="0 0 9 9"><path d="M1 1l7 7M8 1L1 8" stroke="#000" strokeWidth="2.2" /></svg>
              </ChildControl>
            </ChildControls>
          </MainBar>

          <DisplayBar>
            <ToolGroup items={displayTools} />
            <Separator />
            <ToolGroup items={linkTools} />
            <Separator />
            <ToolGroup items={[["track", "Track telescope"]]} />
          </DisplayBar>

          <Workspace>
            <LeftBar>
              {leftTools.map(([name, label, pressed]) => (
                <Tool key={name} type="button" aria-label={label} $pressed={pressed}>
                  {icons[name] ? <Icon name={name} size={15} /> : <CoordMode>{name}</CoordMode>}
                </Tool>
              ))}
            </LeftBar>
            <Sky>
              <Legend>
                {legend.map((l) => (
                  <div key={l}>{l}</div>
                ))}
              </Legend>
              <StarMark>
                <svg width="14" height="14" viewBox="0 0 14 14" aria-hidden="true">
                  <circle cx="7" cy="7" r="5.5" fill="none" stroke="#ddd" strokeDasharray="3 1.3" />
                  <circle cx="7" cy="7" r="3.6" fill="#ffffc0" />
                </svg>
                <StarLabel>Tau Cet</StarLabel>
              </StarMark>
              <CompassRose />
              <ScaleBar />
            </Sky>
            <RightBar>
              {fields.map((f) => (
                <FieldButton key={f} type="button">{f}</FieldButton>
              ))}
              <RightRule />
              <Tool type="button" aria-label="Whole sky">
                <Icon name="horizon" />
              </Tool>
              {directions.map((d) => (
                <DirectionButton key={d} type="button">{d}</DirectionButton>
              ))}
            </RightBar>
          </Workspace>

          <StatusBar>
            <StatusCell $first>
              <div>Az:+176°40'32.3" +17°17'04.6"</div>
              <div>RA: 01h44m52.42s -15°51'25.3"</div>
            </StatusCell>
            <StatusCell>
              <div>RA: 01h44m45.35s DE:-15°51'39.3"{"\u00a0 "}Star: Tau Cet{"\u00a0 "}Visual magnitude:{"\u00a0 "}3.49{"\u00a0 "}HD:10700</div>
              <div>Rise:{"\u00a0 "}9h44m{"\u00a0\u00a0 "}Culmination: 14h05m{"\u00a0\u00a0 "}Set: 18h26m</div>
            </StatusCell>
          </StatusBar>
        </AppFrame>

        <TaskBar>
          <StartButton type="button" aria-label="Start">
            <StartOrb />
          </StartButton>
          {tasks.map((t) => (
            <Task key={t.id} type="button" aria-label={t.name} $open={t.open} $active={t.active} $stack={t.stack}>
              {t.id === "cdc" ? (
                <CometIcon size={32} />
              ) : (
                <svg width="34" height="34" viewBox="0 0 36 36" aria-hidden="true">{appIcons[t.id]}</svg>
              )}
            </Task>
          ))}
          <Tray>
            <Language type="button">RU</Language>
            <TrayButton type="button" aria-label="Show hidden icons">
              <svg width="8" height="4" viewBox="0 0 8 4"><path d="M0 4h8L4 0z" fill="#fff" /></svg>
            </TrayButton>
            {Object.keys(trayIcons).map((k) => (
              <TrayButton key={k} type="button" aria-label={k}>
                <svg width="16" height="16" viewBox="0 0 16 16">{trayIcons[k]}</svg>
              </TrayButton>
            ))}
            <Clock>
              <div>13:52</div>
              <div>01.04.2015</div>
            </Clock>
            <ShowDesktop type="button" aria-label="Show desktop" />
          </Tray>
        </TaskBar>

        <DetailsWindow />
      </Desktop>
    </>
  );
};

export default App;

const Desktop = styled.div`
  position: relative;
  display: flex;
  flex-direction: column;
  min-height: 100vh;
  overflow: hidden;
`;

const TitleBar = styled.header`
  display: flex;
  align-items: flex-start;
  gap: 5px;
  height: 21px;
  background:
    linear-gradient(transparent 40%, rgba(255, 255, 255, 0.35)),
    linear-gradient(
      100deg,
      #f4ffff 0,
      #d0f8fc 8%,
      #8ce8f0 11%,
      #a4eef4 18%,
      #8ee4ec 22%,
      #dcfcfc 24%,
      #b8f4f6 30%,
      #e4fefd 34%,
      #a8f0f2 38%,
      #dcfcfc 44%,
      #dcfcfc 50%,
      #b0f0f8 54%,
      #84bcf0 57%,
      #a8f4f6 59%,
      #b8f8fa 65%,
      #8cc8f0 71%,
      #aef4f6 73%,
      #80b8e8 76%,
      #b8f8fa 78%,
      #d8fcfc 84%,
      #8cc8ec 88%,
      #c8fafc 92%,
      #d8fcfc
    );
`;

const Title = styled.span`
  line-height: 17px;
  text-shadow: 0 0 6px #fff, 0 0 10px #fff;
`;

const WindowControls = styled.div`
  display: flex;
  height: 12px;
  margin: 0 3px 0 auto;
  border: 1px solid #9ec4cc;
  border-top: 0;
  border-radius: 0 0 5px 5px;
  overflow: hidden;
`;

const WindowControl = styled.button`
  display: flex;
  justify-content: center;
  align-items: flex-start;
  width: ${(props) => (props.$wide ? "48px" : "27px")};
  padding: 0;
  border: 0;
  border-left: ${(props) => (props.$wide ? "1px solid #9ec4cc" : "0")};
  background: rgba(255, 255, 255, 0.3);
`;

const AppFrame = styled.div`
  display: flex;
  flex: 1;
  flex-direction: column;
  border-top: 1px solid #60787c;
  border-right: 1px solid #708888;
  box-shadow: 3px 0 0 #c8f4fa;
  margin-right: 3px;
  background: #f0f0f0;
`;

const MenuBar = styled.nav`
  display: flex;
  align-items: center;
  gap: 12px;
  height: 20px;
  padding-left: 8px;
  border-bottom: 1px solid #b8bccc;
  background: linear-gradient(#fff 0, #eef1f8 35%, #d6dcee 45%, #dde2f2 100%);
`;

const MenuItem = styled.button`
  padding: 0;
  border: 0;
  background: none;
  line-height: 18px;
`;

const MenuInfo = styled.span`
  margin-left: 2px;
  color: #777;
  font-family: Roboto, "Open Sans", sans-serif;
  white-space: nowrap;
`;

const bar = css`
  display: flex;
  align-items: center;
  border-bottom: 1px solid #a0a0a0;
  background: #f0f0f0;
`;

const MainBar = styled.div`
  ${bar}
  height: 28px;
  padding-left: 2px;
  border-top: 1px solid #a0a0a0;
`;

const DisplayBar = styled.div`
  ${bar}
  height: 26px;
  padding-left: 1px;
`;

const Tool = styled.button`
  display: flex;
  flex: none;
  align-items: center;
  justify-content: center;
  width: 24px;
  height: 23px;
  padding: 0;
  border: 1px solid transparent;
  border-radius: 3px;
  background: none;

  ${(props) =>
    props.$pressed &&
    css`
      border-color: #707070;
      background: #e2e2e2;
      box-shadow: inset 0 0 2px #888;
    `}
`;

const Dss = styled.span`
  color: #2020d0;
  font-size: 9px;
`;

const Separator = styled.span`
  flex: none;
  width: 1px;
  height: 20px;
  margin: ${(props) => (props.$wide ? "0 2px 0 4px" : "0 2px 0 1px")};
  background: #888;
`;

const Combo = styled.div`
  display: flex;
  align-items: center;
  width: 298px;
  height: 23px;
  margin-left: 2px;
  background: #fff;
`;

const ComboInput = styled.input`
  flex: 1;
  min-width: 0;
  padding: 0 5px;
  border: 0;
  outline: 0;
  background: none;
`;

const ComboArrow = styled.button`
  display: flex;
  align-items: center;
  justify-content: center;
  width: 16px;
  height: 20px;
  padding: 0;
  border: 0;
  background: none;
`;

const StepInput = styled.input`
  width: 35px;
  height: 22px;
  padding: 0 5px;
  border: 0;
  outline: 0;
  background: #fff;
`;

const Spinner = styled.div`
  display: flex;
  flex-direction: column;
  gap: 1px;
  margin: 0 7px 0 2px;
`;

const SpinButton = styled.button`
  display: flex;
  align-items: center;
  justify-content: center;
  width: 15px;
  height: 10px;
  padding: 0;
  border: 1px solid #777;
  border-radius: 2px;
  background: #eee;
`;

const UnitBox = styled.div`
  display: flex;
  align-items: center;
  width: 95px;
  height: 23px;
  padding-right: 4px;
  border: 1px solid #707070;
  border-radius: 2px;
  background: linear-gradient(#f4f4f4, #ececec 48%, #dcdcdc 52%, #d0d0d0);
`;

const UnitSelect = styled.select`
  flex: 1;
  height: 20px;
  padding: 0 2px;
  border: 0;
  outline: 0;
  background: none;
  appearance: none;
`;

const ChildControls = styled.div`
  display: flex;
  align-self: flex-start;
  gap: 4px;
  margin: 3px 2px 0 auto;
`;

const ChildControl = styled.button`
  display: flex;
  align-items: center;
  justify-content: center;
  width: 11px;
  height: 11px;
  padding: 0;
  border: 0;
  background: #c0c0c0;
`;

const Workspace = styled.main`
  display: flex;
  flex: 1;
`;

const LeftBar = styled.aside`
  display: flex;
  flex-direction: column;
  gap: 1px;
  width: 28px;
  padding: 0 2px;
`;

const CoordMode = styled.span`
  color: #0000b0;
  font-family: "Liberation Sans", Arial, sans-serif;
  font-size: 12px;
  font-weight: 700;
  text-shadow: 2px 2px 0 #c8c8e0, -2px -2px 0 #dcdcec;
`;

const Sky = styled.section`
  position: relative;
  flex: 1;
  background: #00001a;
`;

const Legend = styled.div`
  width: 162px;
  height: 144px;
  padding: 5px;
  background: #1e1e22;
  color: #f4f4f4;
  font-family: "Liberation Sans", Arial, sans-serif;
  font-size: 15px;
  line-height: 18px;
  white-space: nowrap;
`;

const StarMark = styled.div`
  position: absolute;
  top: 50%;
  left: 50%;
  display: flex;
  align-items: center;
  gap: 1px;
  margin: -20px 0 0 -7px;

  svg {
    margin-top: 12px;
  }
`;

const StarLabel = styled.span`
  padding: 2px 4px 2px 2px;
  border: 1px solid #3a3c48;
  color: #f0f0f0;
  font-family: "Liberation Sans", Arial, sans-serif;
  font-size: 16px;
  line-height: 22px;
`;

const Rose = styled.svg`
  position: absolute;
  left: 8px;
  bottom: 9px;
  width: 84px;
  height: 84px;
`;

const Scale = styled.svg`
  position: absolute;
  left: 92px;
  bottom: 1px;
  width: 620px;
  height: 40px;
`;

const RightBar = styled.aside`
  display: flex;
  flex-direction: column;
  align-items: center;
  width: 28px;
`;

const FieldButton = styled.button`
  width: 28px;
  height: 27px;
  padding: 0 0 6px;
  border: 0;
  background: none;
  font-weight: 700;
`;

const RightRule = styled.span`
  width: 22px;
  height: 1px;
  margin: 4px 0 7px;
  background: #888;
`;

const DirectionButton = styled.button`
  width: 24px;
  height: 24px;
  padding: 0;
  border: 0;
  background: none;
  color: #4040d0;
  font-family: "Liberation Sans", Arial, sans-serif;
  font-weight: 700;
`;

const StatusBar = styled.footer`
  display: flex;
  height: 34px;
  background: #f0f0f0;
  font-size: 11px;
  line-height: 15px;
  white-space: nowrap;
`;

const StatusCell = styled.div`
  flex: ${(props) => (props.$first ? "0 0 191px" : "1")};
  padding-left: ${(props) => (props.$first ? "0" : "1px")};
  border-right: ${(props) => (props.$first ? "1px solid #a0a0a0" : "0")};
`;

const TaskBar = styled.div`
  display: flex;
  gap: 4px;
  height: 40px;
  padding-left: 1px;
  border-top: 1px solid #2a3440;
  background:
    linear-gradient(rgba(160, 190, 220, 0.4), transparent 20%),
    radial-gradient(ellipse at 34% 100%, #2a4a68 0, transparent 4%),
    radial-gradient(ellipse at 67% 0, #284a70 0, transparent 6%),
    linear-gradient(90deg, #0c1420, #16263a 30%, #101a2a 60%, #142236 70%, #0a1018 80%, #16222e);
`;

const StartButton = styled.button`
  width: 54px;
  padding: 0 6px;
  border: 0;
  background: none;
`;

const Task = styled.button`
  display: flex;
  flex: none;
  align-items: center;
  justify-content: center;
  width: 58px;
  height: 38px;
  padding: 0;
  border: 1px solid transparent;
  border-radius: 3px;
  background: none;

  ${(props) =>
    props.$open &&
    css`
      border-color: #8a929c;
      background: linear-gradient(160deg, #6e7884, #3c4652 50%, #1e2834 52%, #3a4450);
    `}

  ${(props) =>
    props.$active &&
    css`
      border-color: #e4e8ec;
      background: linear-gradient(160deg, #c8ccd2, #8c929a 50%, #787e88 52%, #a8aeb6);
    `}

  ${(props) =>
    props.$stack &&
    css`
      width: 52px;
      margin-right: 6px;
      box-shadow: 2px 0 0 #1c2632, 3px 0 0 #7c858f, 5px 0 0 #1c2632;
    `}
`;

const Tray = styled.div`
  display: flex;
  align-items: center;
  margin-left: auto;
  color: #fff;
`;

const Language = styled.button`
  width: 32px;
  margin-bottom: 6px;
  padding: 0;
  border: 0;
  background: none;
`;

const TrayButton = styled.button`
  display: flex;
  align-items: center;
  justify-content: center;
  width: 24px;
  height: 30px;
  padding: 0;
  border: 0;
  background: none;
`;

const Clock = styled.div`
  width: 78px;
  line-height: 17px;
  text-align: center;
`;

const ShowDesktop = styled.button`
  width: 13px;
  height: 38px;
  margin: 0 1px 0 0;
  padding: 0;
  border: 1px solid #6a7884;
  background: linear-gradient(135deg, #46525e, #1c2832);
`;

const Dialog = styled.div`
  position: absolute;
  top: 88px;
  right: 364px;
  bottom: 48px;
  display: flex;
  flex-direction: column;
  width: 408px;
  padding: 0 6px 6px;
  border: 1px solid #101820;
  border-radius: 7px;
  background: linear-gradient(#8c98a8 0, #5c6878 3%, #767a84 18%, #b8bcc4 26%, #141c2c 27%, #141c2c 97%, #a8c8e8 98%);
  box-shadow: inset 0 0 0 1px #c8d4e0, 2px 2px 8px 2px rgba(0, 0, 0, 0.7);
`;

const DialogTitle = styled.div`
  display: flex;
  align-items: center;
  gap: 5px;
  height: 28px;
  margin: 1px -5px 0;
  padding-left: 6px;
  border-radius: 6px 6px 0 0;
  background: linear-gradient(90deg, #8c96a4 0, #a8b0bc 12%, #8894a8 17%, #4c6488 24%, #1c3050 34%, #061020 47%, #2a3c58 66%, #5c646e 100%);
`;

const DialogName = styled.span`
  line-height: 16px;
  padding-bottom: 2px;
`;

const DialogControls = styled.div`
  display: flex;
  align-self: flex-start;
  height: 19px;
  margin: 0 4px 0 auto;
  border: 1px solid #c8d0d8;
  border-top: 0;
  border-radius: 0 0 5px 5px;
  overflow: hidden;
`;

const DialogControl = styled.button`
  display: flex;
  align-items: center;
  justify-content: center;
  width: ${(props) => (props.$close ? "47px" : "27px")};
  padding: 0;
  border: 0;
  border-right: ${(props) => (props.$close ? "0" : "1px solid #a8b0bc")};
  background: ${(props) =>
    props.$close
      ? "linear-gradient(#e09a8c, #c85040 45%, #a82010 50%, #d06040)"
      : "linear-gradient(#98a0ac, #687484 45%, #3c4858 50%, #687484)"};
`;

const DialogBody = styled.div`
  display: flex;
  flex: 1;
  flex-direction: column;
  border: 1px solid #404854;
  background: #fff;
`;

const DialogBar = styled.div`
  display: flex;
  gap: 10px;
  padding: 6px 4px 5px;
  border-bottom: 1px solid #a0a0a0;
  background: #f0f0f0;
`;

const Button = styled.button`
  width: ${(props) => props.$width}px;
  height: 23px;
  padding: 0;
  border: 1px solid #707070;
  border-radius: 3px;
  background: linear-gradient(#f2f2f2, #ebebeb 48%, #dddddd 52%, #cfcfcf);
  white-space: nowrap;

  ${(props) =>
    props.$focused &&
    css`
      border-color: #2c8cc0;
      background: linear-gradient(#f0faff, #dcf2fc 48%, #c4e6fa 52%, #b8e0f8);
      box-shadow: inset 0 0 0 1px #40c8f4;
    `}
`;

const DetailText = styled.div`
  display: flex;
  flex-direction: column;
  gap: 16px;
  padding: 10px 9px 0;
  font-family: "Liberation Sans", Arial, sans-serif;
  font-size: 11px;
  line-height: 16px;
`;

const DetailHeading = styled.h1`
  margin: 0 0 -16px;
  font-size: 20px;
  line-height: 30px;
`;

const DetailGroup = styled.div``;

const Line = styled.div`
  white-space: pre;
`;

const DetailLink = styled.a`
  color: #0000c8;
`;
